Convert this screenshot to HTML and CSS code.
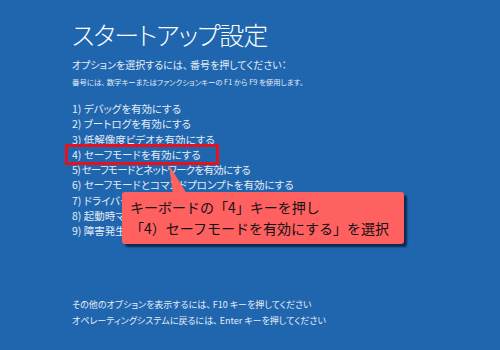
FILE: index.html
```html
<!DOCTYPE html>
<html lang="ja">

<head>
    <meta charset="utf-8">
    <title>スタートアップ設定</title>
    <link rel="stylesheet" href="styles.css">
</head>

<body>
    <div class="screen">
        <h1 class="title">スタートアップ設定</h1>
        <p class="lead">オプションを選択するには、 番号を押してください：</p>
        <p class="note">番号には、 数字キーまたはファンクションキーの F1 から F9 を使用します。</p>

        <ul class="options">
            <li>1) デバッグを有効にする</li>
            <li>2) ブートログを有効にする</li>
            <li>3) 低解像度ビデオを有効にする</li>
            <li><span class="picked">4) セーフモードを有効にする</span></li>
            <li class="tight">5) セーフモードとネットワークを有効にする</li>
            <li>6) セーフモードとコマンドプロンプトを有効にする</li>
            <li>7) ドライバー署名の強制を無効にする</li>
            <li>8) 起動時マルウェア対策を無効にする</li>
            <li>9) 障害発生後の自動再起動を無効にする</li>
        </ul>

        <div class="footer">
            <p>その他のオプションを表示するには、 F10 キーを押してください</p>
            <p>オペレーティングシステムに戻るには、 Enter キーを押してください</p>
        </div>
    </div>

    <div class="callout">
        <svg class="pointer" width="40" height="30" viewBox="0 0 40 30">
            <polygon points="5,0 9,29 23,29" fill="#ff6060" />
        </svg>
        <p>キーボードの「4」キーを押し</p>
        <p>「4）セーフモードを有効にする」を選択</p>
    </div>
</body>

</html>
```

FILE: styles.css
```css
* {
    box-sizing: border-box;
    padding: 0;
    margin: 0;
}

body {
    width: 500px;
    height: 350px;
    overflow: hidden;
    background-color: #2066ae;
    font-family: "Noto Sans CJK JP", "Noto Sans", sans-serif;
    font-feature-settings: "palt";
    color: #e4ecf6;
}

.screen {
    padding: 16px 0 0 72px;
}

.title {
    font-size: 25px;
    font-weight: 300;
    line-height: 36px;
    color: #ffffff;
    letter-spacing: -1px;
}

.lead {
    margin-top: 6px;
    font-size: 10px;
    line-height: 14px;
}

.note {
    margin-top: 4px;
    font-size: 7.4px;
    line-height: 12px;
}

.options {
    list-style: none;
    margin-top: 13px;
    font-size: 10.5px;
    line-height: 15.3px;
}

.picked {
    display: inline-block;
    outline: 3px solid #e8101c;
    margin-left: -4px;
    padding-left: 4px;
    width: 148px;
}

.tight {
    letter-spacing: -0.7px;
}

.footer {
    margin-top: 58px;
    font-size: 9px;
    line-height: 16px;
}

.callout {
    position: absolute;
    left: 122px;
    top: 192px;
    width: 282px;
    height: 52px;
    padding: 5px 0 0 8px;
    background-color: #ff6060;
    border-radius: 3px;
    box-shadow: 3px 3px 2px rgba(10, 20, 50, 0.75);
    color: #111111;
    font-size: 14px;
    line-height: 21px;
    font-feature-settings: normal;
}

.pointer {
    position: absolute;
    left: 42px;
    top: -27px;
}
```
